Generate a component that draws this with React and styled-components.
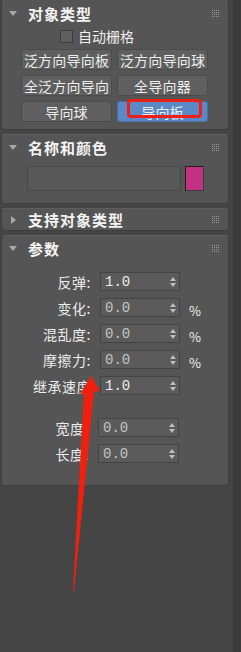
import React from 'react'
import styled, { createGlobalStyle } from 'styled-components'

const GlobalStyle = createGlobalStyle`
  html, body {
    margin: 0;
    padding: 0;
    background: #454545;
  }
  body {
    font-family: "Noto Sans CJK SC", "DejaVu Sans", sans-serif;
    color: #e6e6e6;
  }
`

const Page = styled.div`
  position: relative;
  display: flex;
  width: 241px;
  height: 652px;
  overflow: hidden;
  background: #454545;
`

const Column = styled.div`
  width: 228px;
  padding: 0 4px 0 1px;
  display: flex;
  flex-direction: column;
  gap: 4px;
`

const ScrollStrip = styled.div`
  width: 8px;
  background: #3b3b3b;
`

const Panel = styled.section`
  background: #555555;
  border: 1px solid #3e3e3e;
  border-top-color: #5e5e5e;
  border-radius: 3px;
  margin-top: ${p => p.$first ? '-1px' : '0'};
  padding-bottom: ${p => p.$pad || 0}px;
`

const Header = styled.div`
  height: ${p => p.$h || 24}px;
  display: flex;
  align-items: center;
  padding: 0 8px 0 7px;
`

const Caret = styled.span`
  width: 0;
  height: 0;
  margin-right: 11px;
  ${p => p.$open
    ? `border-left: 4px solid transparent; border-right: 4px solid transparent; border-top: 5px solid #a8a8a8;`
    : `border-top: 4px solid transparent; border-bottom: 4px solid transparent; border-left: 5px solid #a8a8a8; margin-left: 2px; margin-right: 12px;`}
`

const Title = styled.span`
  flex: 1;
  font-size: 15px;
  font-weight: 700;
  color: #f4f4f4;
  letter-spacing: 1px;
  line-height: 1;
`

const Grip = styled.span`
  display: grid;
  grid-template-columns: repeat(4, 1px);
  grid-auto-rows: 1px;
  gap: 1px;
  margin-right: 1px;
  span { background: #9a9a9a; }
`

const CheckRow = styled.label`
  display: flex;
  align-items: center;
  gap: 5px;
  padding-left: 58px;
  height: 18px;
  font-size: 14px;
  color: #eeeeee;
`

const Box = styled.span`
  width: 11px;
  height: 11px;
  background: #5f5f5f;
  border: 1px solid #3c3c3c;
`

const ButtonGrid = styled.div`
  display: grid;
  grid-template-columns: 91px 91px;
  grid-auto-rows: 21px;
  gap: 5px;
  padding: 4px 0 0 19px;
`

const Button = styled.div`
  position: relative;
  box-sizing: border-box;
  display: flex;
  align-items: center;
  justify-content: center;
  border-radius: 3px;
  background: ${p => p.$active ? '#5c88c6' : '#5f5f5f'};
  border: 1px solid ${p => p.$active ? '#4a6fa3' : '#4b4b4b'};
  font-size: 14px;
  color: #ececec;
  white-space: nowrap;
  letter-spacing: 0.2px;
`

const RedMark = styled.span`
  position: absolute;
  left: 9px;
  top: -3px;
  width: 75px;
  height: 19px;
  box-sizing: border-box;
  border: 3px solid #ee1f17;
  border-radius: 4px;
`

const NameRow = styled.div`
  display: flex;
  gap: 4px;
  padding: 7px 0 0 25px;
  height: 25px;
`

const NameField = styled.div`
  width: 154px;
  box-sizing: border-box;
  background: #585858;
  border: 1px solid #474747;
`

const Swatch = styled.div`
  width: 19px;
  box-sizing: border-box;
  background: #c23182;
  border-top: 1px solid #1e1e1e;
  border-left: 1px solid #1e1e1e;
  border-right: 1px solid #3c3c3c;
  border-bottom: 1px solid #3c3c3c;
`

const Params = styled.div`
  display: grid;
  grid-template-columns: ${p => p.$label}px ${p => p.$box}px auto;
  grid-auto-rows: 19px;
  column-gap: 9px;
  row-gap: 7px;
  align-items: center;
  margin-top: ${p => p.$top}px;
`

const Label = styled.span`
  text-align: right;
  font-size: 14px;
  color: #ededed;
  white-space: nowrap;
  letter-spacing: 0.5px;
`

const Spinner = styled.div`
  height: 19px;
  box-sizing: border-box;
  display: flex;
  align-items: center;
  justify-content: space-between;
  padding: 0 3px 0 4px;
  background: #5b5b5b;
  border: 1px solid #434343;
  font-family: "Liberation Mono", "DejaVu Sans Mono", monospace;
  font-size: 14px;
  color: ${p => p.$dim ? '#c4c4c4' : '#ececec'};
`

const Arrows = styled.span`
  display: flex;
  flex-direction: column;
  gap: 2px;
  i {
    width: 0;
    height: 0;
    border-left: 3px solid transparent;
    border-right: 3px solid transparent;
  }
  i:first-child { border-bottom: 4px solid #bdbdbd; }
  i:last-child { border-top: 4px solid #bdbdbd; }
`

const Unit = styled.span`
  font-size: 13px;
  color: #f0f0f0;
  padding-top: 5px;
`

const ArrowOverlay = styled.svg`
  position: absolute;
  left: 0;
  top: 0;
  pointer-events: none;
`

function Dots() {
  return (
    <Grip>
      {Array.from({ length: 16 }, (_, i) => <span key={i} />)}
    </Grip>
  )
}

function PanelHeader({ title, open = true, h }) {
  return (
    <Header $h={h}>
      <Caret $open={open} />
      <Title>{title}</Title>
      <Dots />
    </Header>
  )
}

function Spin({ value, dim }) {
  return (
    <Spinner $dim={dim}>
      {value}
      <Arrows><i /><i /></Arrows>
    </Spinner>
  )
}

const rows = [
  ['反弹:', '1.0', false, ''],
  ['变化:', '0.0', true, '%'],
  ['混乱度:', '0.0', true, '%'],
  ['摩擦力:', '0.0', true, '%'],
  ['继承速度', '1.0', false, ''],
]

export default function App() {
  return (
    <Page>
      <GlobalStyle />
      <Column>
        <Panel $first $pad={7}>
          <PanelHeader title="对象类型" h={27} />
          <CheckRow><Box />自动栅格</CheckRow>
          <ButtonGrid>
            <Button>泛方向导向板</Button>
            <Button>泛方向导向球</Button>
            <Button>全泛方向导向</Button>
            <Button>全导向器</Button>
            <Button>导向球</Button>
            <Button $active>导向板<RedMark /></Button>
          </ButtonGrid>
        </Panel>

        <Panel $pad={12}>
          <PanelHeader title="名称和颜色" />
          <NameRow>
            <NameField />
            <Swatch />
          </NameRow>
        </Panel>

        <Panel>
          <PanelHeader title="支持对象类型" open={false} h={21} />
        </Panel>

        <Panel $pad={22}>
          <PanelHeader title="参数" />
          <Params $label={89} $box={80} $top={12}>
            {rows.map(([label, value, dim, unit]) => (
              <React.Fragment key={label}>
                <Label>{label}</Label>
                <Spin value={value} dim={dim} />
                <Unit>{unit}</Unit>
              </React.Fragment>
            ))}
          </Params>
          <Params $label={87} $box={81} $top={23}>
            <Label>宽度:</Label>
            <Spin value="0.0" dim />
            <Unit />
            <Label>长度:</Label>
            <Spin value="0.0" dim />
            <Unit />
          </Params>
        </Panel>
      </Column>
      <ScrollStrip />

      <ArrowOverlay width="241" height="652" viewBox="0 0 241 652">
        <polygon points="84,392 94,392 74,591 73,591" fill="#f0200f" />
        <polygon points="91,376 100,391 80,394" fill="#f0200f" />
      </ArrowOverlay>
    </Page>
  )
}
